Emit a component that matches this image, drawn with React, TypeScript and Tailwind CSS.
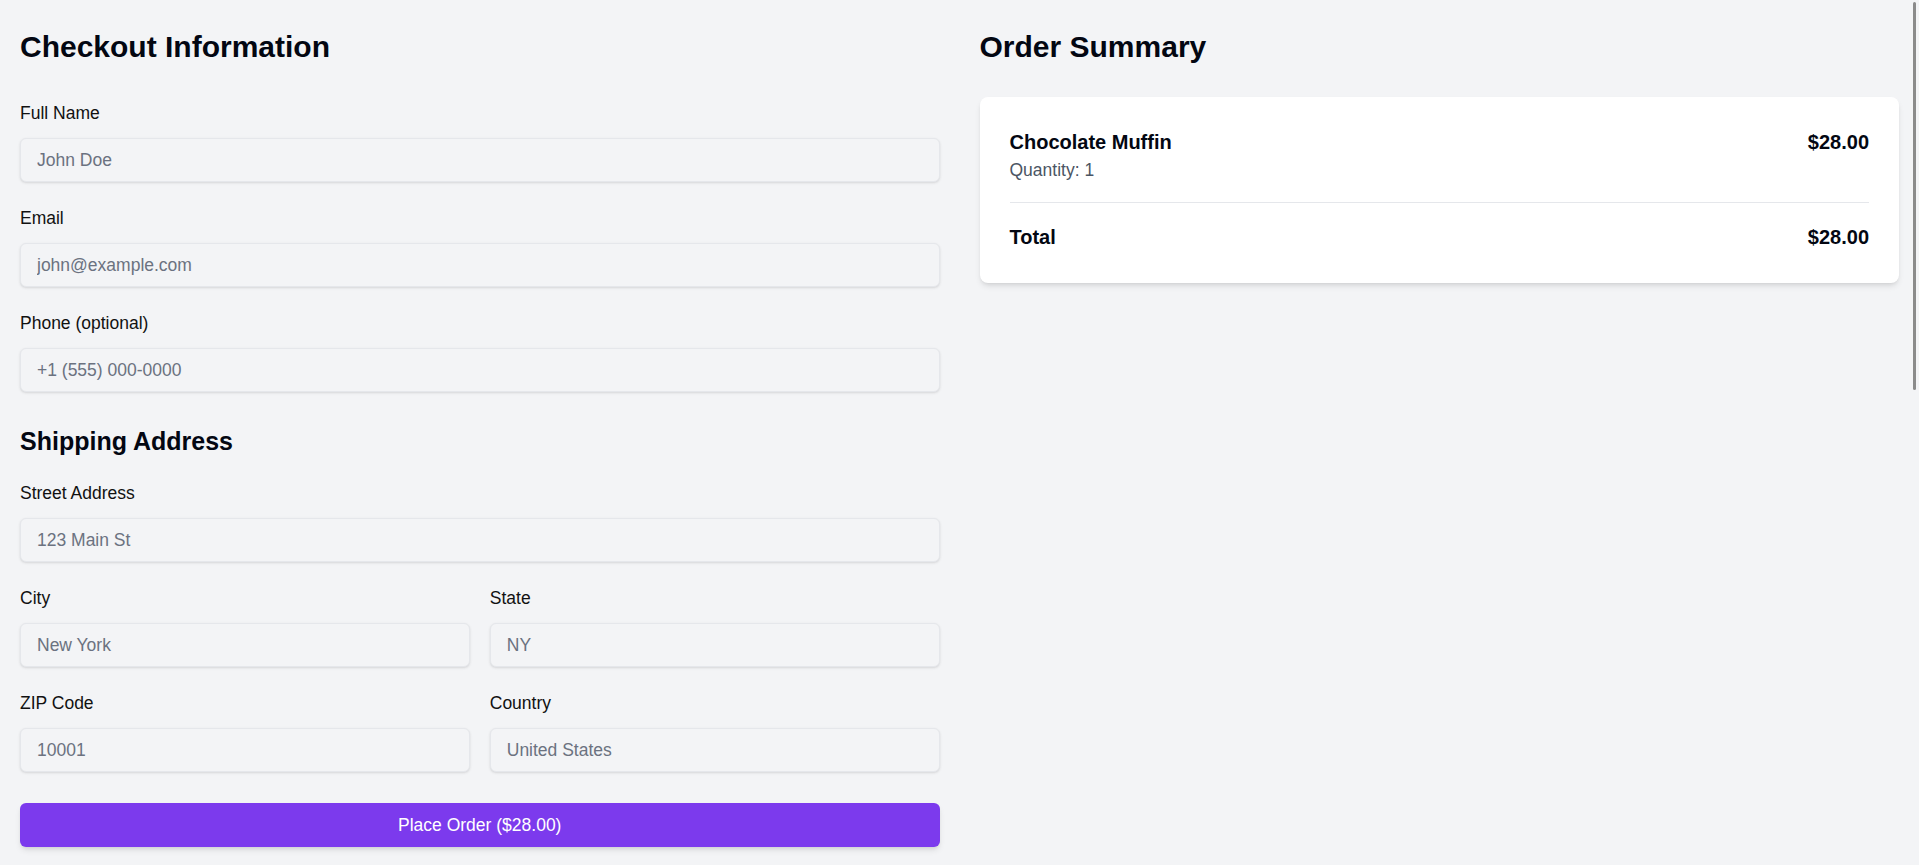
import { useState, FormEvent, JSX } from 'react';

type FieldProps = {
  label: string;
  placeholder: string;
  type?: string;
};

function Field({ label, placeholder, type = 'text' }: FieldProps): JSX.Element {
  return (
    <div>
      <label className="block text-[17.5px] leading-6 text-[#111111] mb-[13px]">{label}</label>
      <input
        type={type}
        placeholder={placeholder}
        className="block w-full h-11 px-4 text-[17.5px] rounded-md border border-[#e5e7eb] bg-[#f3f4f6] shadow-sm text-[#111111] placeholder:text-[#6b7280] outline-none"
      />
    </div>
  );
}

export default function App(): JSX.Element {
  const [placed, setPlaced] = useState<boolean>(false);

  const handleSubmit = (e: FormEvent<HTMLFormElement>): void => {
    e.preventDefault();
    setPlaced(true);
  };

  return (
    <div className="min-h-screen bg-[#f3f4f6] font-['Liberation_Sans',Arial,sans-serif] text-[#111111]">
      <div className="grid grid-cols-2 gap-10 px-5 pt-[29px] pb-5">
        {/* Checkout form */}
        <form onSubmit={handleSubmit}>
          <h1 className="text-3xl leading-9 font-bold text-[#030712] mb-9">Checkout Information</h1>

          <div className="flex flex-col gap-6">
            <Field label="Full Name" placeholder="John Doe" />
            <Field label="Email" placeholder="john@example.com" type="email" />
            <Field label="Phone (optional)" placeholder="+1 (555) 000-0000" type="tel" />
          </div>

          <h2 className="text-[25px] leading-8 font-bold text-[#030712] mt-[33px] mb-6">Shipping Address</h2>

          <div className="flex flex-col gap-6">
            <Field label="Street Address" placeholder="123 Main St" />
            <div className="grid grid-cols-2 gap-5">
              <Field label="City" placeholder="New York" />
              <Field label="State" placeholder="NY" />
            </div>
            <div className="grid grid-cols-2 gap-5">
              <Field label="ZIP Code" placeholder="10001" />
              <Field label="Country" placeholder="United States" />
            </div>
          </div>

          <button
            type="submit"
            className="mt-[31px] w-full h-11 rounded-md bg-[#7c3aed] text-white text-[17.5px] shadow-md hover:bg-[#6d28d9]"
          >
            {placed ? 'Order Placed!' : 'Place Order ($28.00)'}
          </button>
        </form>

        {/* Order summary */}
        <section>
          <h2 className="text-3xl leading-9 font-bold text-[#030712] mb-8">Order Summary</h2>
          <div className="bg-white rounded-lg shadow-md px-[30px] pt-[31px] pb-8">
            <div className="flex justify-between items-start pb-5 border-b border-[#e5e7eb]">
              <div>
                <div className="text-xl leading-7 font-bold text-[#030712]">Chocolate Muffin</div>
                <div className="mt-[2px] text-[17.5px] leading-6 text-[#4b5563]">Quantity: 1</div>
              </div>
              <div className="text-xl leading-7 font-bold text-[#030712]">$28.00</div>
            </div>
            <div className="flex justify-between pt-5 text-xl leading-7 font-bold text-[#030712]">
              <span>Total</span>
              <span>$28.00</span>
            </div>
          </div>
        </section>
      </div>

      {/* overlay scrollbar thumb */}
      <div aria-hidden className="fixed top-[2px] right-[3px] w-[3px] h-[388px] rounded-full bg-[#8b8b8b]" />
    </div>
  );
}
